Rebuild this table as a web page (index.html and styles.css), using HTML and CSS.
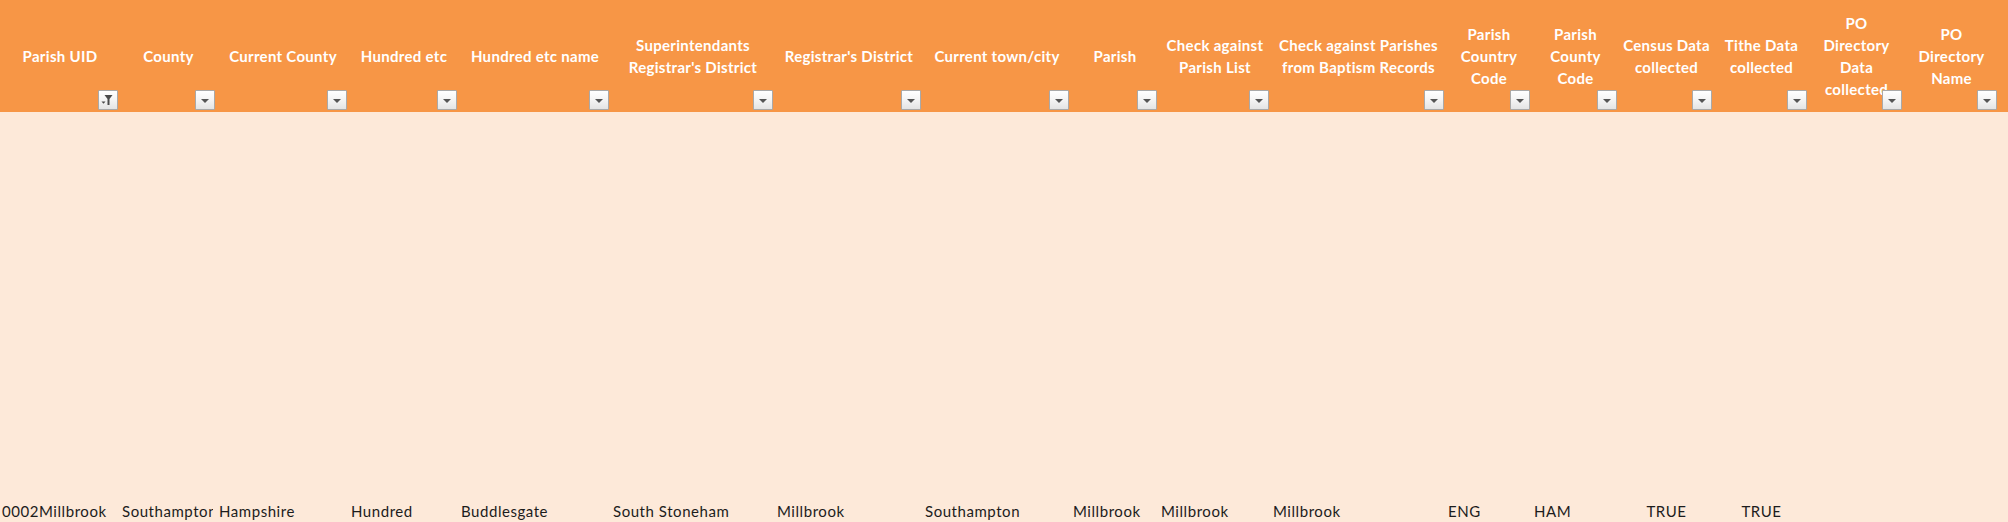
FILE: index.html
```html
<!DOCTYPE html>
<html lang="en">
<head>
<meta charset="utf-8">
<title>Parish sheet</title>
<link rel="stylesheet" href="styles.css">
</head>
<body>
<div class="sheet">
  <div class="row head">
    <div class="hc"><span>Parish UID</span><button class="flt on" aria-label="filter"><svg viewBox="0 0 18 18" width="18" height="18"><path d="M5.5 4h8l-3 4v6h-2V8z" fill="#4a4a4a"/><path d="M2.5 10.5h4l-2 2.2z" fill="#4a4a4a"/></svg></button></div>
    <div class="hc"><span>County</span><button class="flt" aria-label="filter"></button></div>
    <div class="hc"><span>Current County</span><button class="flt" aria-label="filter"></button></div>
    <div class="hc"><span>Hundred etc</span><button class="flt" aria-label="filter"></button></div>
    <div class="hc"><span>Hundred etc name</span><button class="flt" aria-label="filter"></button></div>
    <div class="hc"><span>Superintendants<br>Registrar's District</span><button class="flt" aria-label="filter"></button></div>
    <div class="hc"><span>Registrar's District</span><button class="flt" aria-label="filter"></button></div>
    <div class="hc"><span>Current town/city</span><button class="flt" aria-label="filter"></button></div>
    <div class="hc"><span>Parish</span><button class="flt" aria-label="filter"></button></div>
    <div class="hc"><span>Check against<br>Parish List</span><button class="flt" aria-label="filter"></button></div>
    <div class="hc"><span>Check against Parishes<br>from Baptism Records</span><button class="flt" aria-label="filter"></button></div>
    <div class="hc"><span>Parish<br>Country<br>Code</span><button class="flt" aria-label="filter"></button></div>
    <div class="hc"><span>Parish<br>County<br>Code</span><button class="flt" aria-label="filter"></button></div>
    <div class="hc"><span>Census Data<br>collected</span><button class="flt" aria-label="filter"></button></div>
    <div class="hc"><span>Tithe Data<br>collected</span><button class="flt" aria-label="filter"></button></div>
    <div class="hc"><span>PO<br>Directory<br>Data<br>collected</span><button class="flt" aria-label="filter"></button></div>
    <div class="hc"><span>PO<br>Directory<br>Name</span><button class="flt" aria-label="filter"></button></div>
    <div class="hc"></div>
  </div>
  <div class="body">
    <div class="row data">
      <div class="dc">0002Millbrook</div>
      <div class="dc">Southampton</div>
      <div class="dc">Hampshire</div>
      <div class="dc">Hundred</div>
      <div class="dc">Buddlesgate</div>
      <div class="dc">South Stoneham</div>
      <div class="dc">Millbrook</div>
      <div class="dc">Southampton</div>
      <div class="dc">Millbrook</div>
      <div class="dc">Millbrook</div>
      <div class="dc">Millbrook</div>
      <div class="dc">ENG</div>
      <div class="dc">HAM</div>
      <div class="dc bool">TRUE</div>
      <div class="dc bool">TRUE</div>
      <div class="dc"></div>
      <div class="dc"></div>
      <div class="dc"></div>
    </div>
  </div>
</div>
</body>
</html>
```

FILE: styles.css
```css
html, body {
  margin: 0;
  padding: 0;
}
body {
  width: 2008px;
  height: 522px;
  overflow: hidden;
  background: #fde9d9;
  font-family: Lato, "Open Sans", sans-serif;
}
.sheet {
  display: flex;
  flex-direction: column;
  height: 522px;
}
.row {
  display: grid;
  grid-template-columns: 120px 97px 132px 110px 152px 164px 148px 148px 88px 112px 175px 86px 87px 95px 95px 95px 95px 1fr;
}
.head {
  height: 112px;
  background: #f79646;
}
.hc {
  position: relative;
  display: flex;
  align-items: center;
  justify-content: center;
  text-align: center;
  color: #ffffff;
  font-weight: 700;
  font-size: 15px;
  letter-spacing: 0.3px;
  line-height: 22px;
  white-space: nowrap;
}
.flt {
  position: absolute;
  right: 2px;
  bottom: 2px;
  width: 20px;
  height: 20px;
  padding: 0;
  margin: 0;
  box-sizing: border-box;
  border: 1px solid #a9a9a9;
  border-radius: 1px;
  background: linear-gradient(#ffffff, #f4f4f4 50%, #e4e4e4);
  display: flex;
  align-items: center;
  justify-content: center;
}
.flt::after {
  content: "";
  display: block;
  width: 0;
  height: 0;
  border-left: 4px solid transparent;
  border-right: 4px solid transparent;
  border-top: 4px solid #555555;
  margin-top: 1px;
}
.flt.on::after {
  display: none;
}
.flt svg {
  display: block;
}
.body {
  flex: 1;
  display: flex;
  flex-direction: column;
  justify-content: flex-end;
  padding-bottom: 1px;
}
.data {
  height: 20px;
}
.dc {
  font-size: 15px;
  letter-spacing: 0.55px;
  line-height: 20px;
  color: #1c1c1c;
  padding-left: 2px;
  white-space: nowrap;
  overflow: hidden;
  clip-path: inset(0 4px 0 0);
}
.dc.bool {
  text-align: center;
  padding-left: 0;
}
```
